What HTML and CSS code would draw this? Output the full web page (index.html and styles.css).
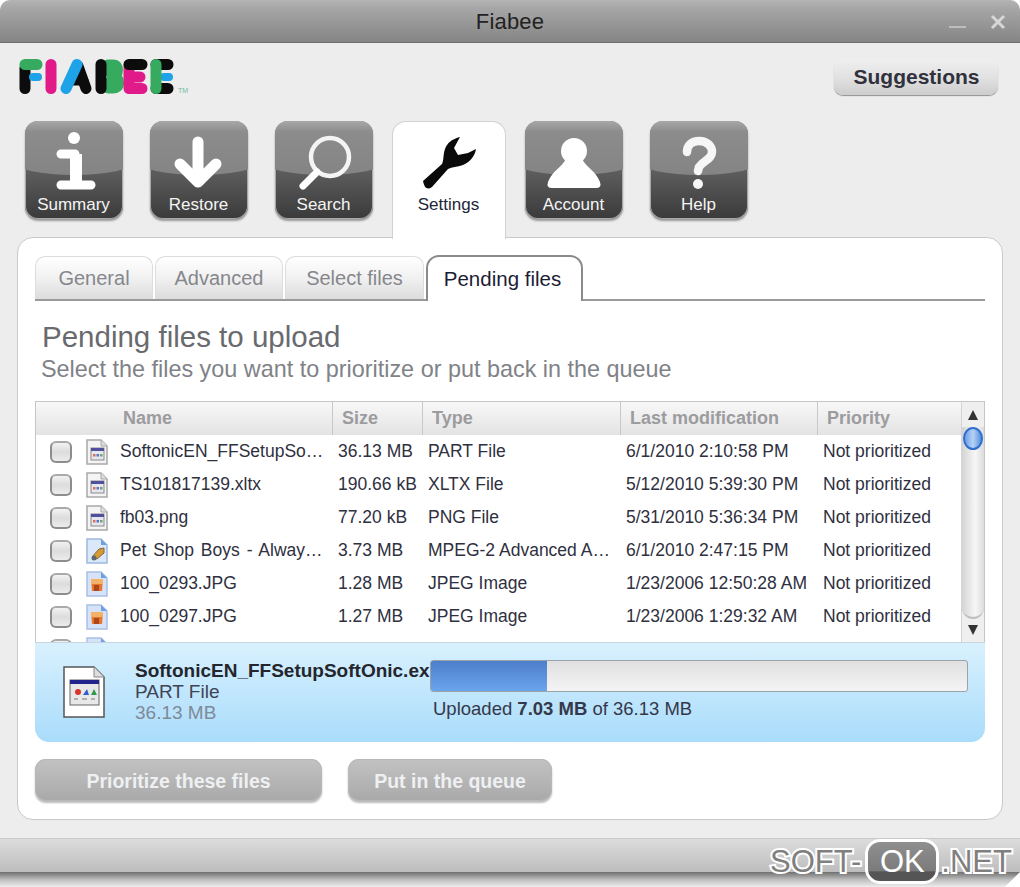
FILE: index.html
```html
<!DOCTYPE html>
<html lang="en">
<head>
<meta charset="utf-8">
<title>Fiabee</title>
<link rel="stylesheet" href="styles.css">
</head>
<body>
<svg class="defs" width="0" height="0" aria-hidden="true">
  <defs>
    <symbol id="doc" viewBox="0 0 22 26">
      <path d="M1 1H15L21 7V25H1Z" fill="#f4f4f4" stroke="#a8a8a8" stroke-width="1.500"/>
      <path d="M15 1V7H21" fill="#ddd" stroke="#a8a8a8"/>
      <rect x="5" y="9" width="13" height="12" fill="#e6e6ee" stroke="#8a8a8a"/>
      <rect x="5" y="9" width="13" height="3" fill="#50509c"/>
      <rect x="7" y="15" width="2.500" height="2.500" fill="#d8705c"/>
      <rect x="10.500" y="15" width="2.500" height="2.500" fill="#6070c8"/>
      <rect x="14" y="15" width="2.500" height="2.500" fill="#68a870"/>
    </symbol>
    <symbol id="media" viewBox="0 0 22 26">
      <path d="M1 1H15L21 7V25H1Z" fill="#dbe8fa" stroke="#9db8e0" stroke-width="1.500"/>
      <path d="M15 1V7H21" fill="#6f9fe0"/>
      <path d="M6 19L13 11L18 10L18 15L11 21Z" fill="#d89a30" stroke="#7b6a40"/>
      <circle cx="8" cy="20" r="2.500" fill="#606870"/>
    </symbol>
    <symbol id="photo" viewBox="0 0 22 26">
      <path d="M1 1H15L21 7V25H1Z" fill="#d5e2f8" stroke="#a9c0e6" stroke-width="1.500"/>
      <path d="M15 1V7H21" fill="#6f9fe0"/>
      <path d="M5 8H17L16 20H6Z" fill="#e8772c"/>
      <rect x="5" y="8" width="12" height="5" fill="#f3b267"/>
      <rect x="8" y="14" width="5" height="6" fill="#a8481c"/>
    </symbol>
  </defs>
</svg>
<div class="window">
  <header class="titlebar">
    <span class="title">Fiabee</span>
    <span class="winbtn minimize"></span>
    <svg class="winbtn close" viewBox="0 0 16 16" width="16" height="16" aria-hidden="true"><path d="M2 2L14 14M14 2L2 14" stroke="#d6d6d6" stroke-width="3"/></svg>
  </header>

  <div class="top-row">
    <svg class="logo" viewBox="18 58 172 38" width="172" height="38" role="img" aria-label="Fiabee">
      <g fill="none" stroke-width="11" stroke-linecap="round" stroke-linejoin="round">
        <path d="M25 68V88.500" stroke="#0c0c0c"/>
        <path d="M25 64.500H37" stroke="#36ab5f"/>
        <path d="M33 77H38" stroke="#1ea3e8" stroke-width="8"/>
        <path d="M51 64.500V88.500" stroke="#e01a88"/>
        <path d="M86 88.500L78 66" stroke="#0c0c0c"/>
        <path d="M72 81H84" stroke="#0c0c0c" stroke-width="9"/>
        <path d="M66 88.500L77 64.500" stroke="#1ea3e8"/>
        <path d="M108 64.500H113Q118 64.500 118 70Q118 76 112 76.500Q119 77 119 83Q119 88.500 113 88.500H108" stroke="#36ab5f" stroke-width="10"/>
        <path d="M109 72H113M109 82H113" stroke="#36ab5f" stroke-width="9"/>
        <path d="M101 64.500V88.500" stroke="#0c0c0c"/>
        <path d="M129 67V88.500H142M129 77H140" stroke="#e01a88"/>
        <path d="M129 64.500H142" stroke="#0c0c0c"/>
        <path d="M164 77H169" stroke="#1ea3e8" stroke-width="8"/>
        <path d="M156 64.500H168M156 88.500H168" stroke="#0c0c0c"/>
        <path d="M156 64.500V88.500" stroke="#36ab5f"/>
      </g>
      <text x="178" y="93" class="logo-tm">TM</text>
    </svg>
    <button class="suggest">Suggestions</button>
  </div>

  <nav class="toolbar">
    <a class="tile">
      <svg class="glyph" viewBox="0 0 98 98" aria-hidden="true">
        <circle cx="49" cy="17" r="6" fill="#fff"/>
        <path d="M36 33H50V63M36 64H66" fill="none" stroke="#fff" stroke-width="9" stroke-linecap="round" stroke-linejoin="round"/>
        <path d="M51 33V64" stroke="#fff" stroke-width="12"/>
      </svg>
      <span class="tile-label">Summary</span>
    </a>
    <a class="tile">
      <svg class="glyph" viewBox="0 0 98 98" aria-hidden="true">
        <path d="M48 21V58M30 43L48 61L66 43" fill="none" stroke="#fff" stroke-width="11" stroke-linecap="round" stroke-linejoin="round"/>
        <path d="M38 50H58L48 60Z" fill="#fff" stroke="#fff" stroke-width="4"/>
      </svg>
      <span class="tile-label">Restore</span>
    </a>
    <a class="tile">
      <svg class="glyph" viewBox="0 0 98 98" aria-hidden="true">
        <circle cx="55" cy="36" r="19" fill="none" stroke="#f4f4f4" stroke-width="4.500"/>
        <path d="M42 51L28 65" stroke="#fff" stroke-width="7" stroke-linecap="round"/>
      </svg>
      <span class="tile-label">Search</span>
    </a>
    <a class="tile-active">
      <svg class="glyph" viewBox="0 0 114 98" aria-hidden="true">
        <path d="M31 60L50 43C52 39 51 33 53 28C55 22 60 18 68 16L62 27L66 34L76 32L84 28C83 35 78 41 71 44C65 46 60 46 56 48L40 66Q33 71 31 60Z" fill="#0a0a0a"/>
      </svg>
      <span class="tile-label active-label">Settings</span>
    </a>
    <a class="tile">
      <svg class="glyph" viewBox="0 0 98 98" aria-hidden="true">
        <circle cx="49" cy="30" r="13" fill="#fff"/>
        <path d="M27 67Q21 67 23 61C27 50 37 46 41 38H57C61 46 71 50 75 61Q77 67 71 67Z" fill="#fff"/>
      </svg>
      <span class="tile-label">Account</span>
    </a>
    <a class="tile">
      <svg class="glyph" viewBox="0 0 98 98" aria-hidden="true">
        <path d="M37 31C37 24 42 20 49 20C57 20 62 25 62 31C62 38 53 40 49 46L48 50" fill="none" stroke="#f6f6f6" stroke-width="8.500" stroke-linecap="round"/>
        <circle cx="48" cy="63" r="5" fill="#f6f6f6"/>
      </svg>
      <span class="tile-label">Help</span>
    </a>
  </nav>

  <main class="panel">
    <div class="subtabs">
      <span class="subtab subtab-general">General</span>
      <span class="subtab subtab-advanced">Advanced</span>
      <span class="subtab subtab-select">Select files</span>
      <span class="subtab-active">Pending files</span>
    </div>

    <h1 class="heading">Pending files to upload</h1>
    <p class="subheading">Select the files you want to prioritize or put back in the queue</p>

    <section class="list">
      <div class="list-main">
        <div class="list-head">
          <span class="hcell hcell-name">Name</span>
          <span class="hcell">Size</span>
          <span class="hcell">Type</span>
          <span class="hcell">Last modification</span>
          <span class="hcell">Priority</span>
        </div>
        <div class="row">
          <span class="cell-name"><i class="check"></i><svg class="ficon"><use href="#doc"/></svg><span>SoftonicEN_FFSetupSo…</span></span>
          <span>36.13 MB</span><span>PART File</span><span>6/1/2010 2:10:58 PM</span><span>Not prioritized</span>
        </div>
        <div class="row">
          <span class="cell-name"><i class="check"></i><svg class="ficon"><use href="#doc"/></svg><span>TS101817139.xltx</span></span>
          <span>190.66 kB</span><span>XLTX File</span><span>5/12/2010 5:39:30 PM</span><span>Not prioritized</span>
        </div>
        <div class="row">
          <span class="cell-name"><i class="check"></i><svg class="ficon"><use href="#doc"/></svg><span>fb03.png</span></span>
          <span>77.20 kB</span><span>PNG File</span><span>5/31/2010 5:36:34 PM</span><span>Not prioritized</span>
        </div>
        <div class="row">
          <span class="cell-name"><i class="check"></i><svg class="ficon"><use href="#media"/></svg><span class="name-spaced">Pet Shop Boys - Alway…</span></span>
          <span>3.73 MB</span><span>MPEG-2 Advanced A…</span><span>6/1/2010 2:47:15 PM</span><span>Not prioritized</span>
        </div>
        <div class="row">
          <span class="cell-name"><i class="check"></i><svg class="ficon"><use href="#photo"/></svg><span>100_0293.JPG</span></span>
          <span>1.28 MB</span><span>JPEG Image</span><span>1/23/2006 12:50:28 AM</span><span>Not prioritized</span>
        </div>
        <div class="row">
          <span class="cell-name"><i class="check"></i><svg class="ficon"><use href="#photo"/></svg><span>100_0297.JPG</span></span>
          <span>1.27 MB</span><span>JPEG Image</span><span>1/23/2006 1:29:32 AM</span><span>Not prioritized</span>
        </div>
        <div class="row">
          <span class="cell-name"><i class="check"></i><svg class="ficon"><use href="#photo"/></svg></span>
        </div>
      </div>
      <div class="scrollbar">
        <i class="arrow-up"></i>
        <div class="track"><i class="thumb"></i></div>
        <i class="arrow-down"></i>
      </div>
    </section>

    <section class="upload">
      <svg class="upload-icon" viewBox="0 0 42 52" width="42" height="52" aria-hidden="true">
        <path d="M1 1H31L41 11V51H1Z" fill="#fff" stroke="#555" stroke-width="1.500"/>
        <path d="M31 1V11H41" fill="#ddd" stroke="#888"/>
        <rect x="7" y="14" width="29" height="25" fill="#e8e8e8" stroke="#666"/>
        <rect x="7" y="14" width="29" height="4" fill="#23238c"/>
        <circle cx="15" cy="26" r="3" fill="#d8342c"/>
        <path d="M20 29L24 23L26 29Z" fill="#2e5fc8"/>
        <path d="M28 29L31 23L34 29Z" fill="#2e9a4c"/>
        <path d="M11 33H15M19 33H24M28 33H32" stroke="#777"/>
      </svg>
      <div class="upload-info">
        <div class="upload-name">SoftonicEN_FFSetupSoftOnic.ex</div>
        <div class="upload-type">PART File</div>
        <div class="upload-size">36.13 MB</div>
      </div>
      <div class="upload-progress">
        <div class="bar"><div class="bar-fill" style="width:21.6%"></div></div>
        <div class="bar-text">Uploaded <b>7.03 MB</b> of 36.13 MB</div>
      </div>
    </section>

    <div class="actions">
      <button class="action action-wide">Prioritize these files</button>
      <button class="action action-narrow">Put in the queue</button>
    </div>
  </main>

  <footer class="statusbar"></footer>
</div>
<div class="shadow"></div>
<div class="watermark"><span class="wm-text">SOFT-</span><span class="wm-ok">OK</span><span class="wm-text">.NET</span></div>
</body>
</html>
```

FILE: styles.css
```css
* { box-sizing: border-box; }
html, body { margin: 0; padding: 0; }
body {
  width: 1020px;
  height: 887px;
  overflow: hidden;
  background: #fff;
  font-family: "Liberation Sans", Arial, sans-serif;
  position: relative;
}
.defs { position: absolute; }

.window {
  height: 872px;
  background: #ededed;
  border-radius: 10px 10px 0 0;
  display: flex;
  flex-direction: column;
  overflow: hidden;
}

.titlebar {
  height: 43px;
  flex: none;
  background: linear-gradient(#b4b4b4, #a6a6a6 20%, #858585);
  border-bottom: 1px solid #6f6f6f;
  display: flex;
  align-items: center;
  justify-content: center;
  position: relative;
}
.title { font-size: 22px; color: #222; margin-top: 2px; letter-spacing: .2px; }
.winbtn { position: absolute; }
.minimize { left: 949px; top: 26px; width: 17px; height: 2px; background: #bdbdbd; }
.close { left: 990px; top: 14px; }

.top-row {
  height: 78px;
  flex: none;
  display: flex;
  justify-content: space-between;
  align-items: flex-start;
  padding: 15px 22px 0 18px;
}
.logo { display: block; }
.logo-tm { font-size: 7px; fill: #77b9a0; }
.suggest {
  width: 164px;
  height: 36px;
  margin-top: 1px;
  border: 0;
  border-radius: 9px;
  background: linear-gradient(#efefef, #e2e2e2 50%, #cdcdcd);
  box-shadow: 0 1px 1px #8f8f8f;
  font: bold 21px "Liberation Sans", Arial, sans-serif;
  color: #30313d;
  padding: 0 0 0 1px;
}

.toolbar {
  flex: none;
  height: 117px;
  display: flex;
  gap: 27px;
  padding-left: 25px;
  align-items: flex-start;
  position: relative;
  z-index: 2;
}
.tile {
  width: 98px;
  height: 98px;
  border-radius: 13px;
  background: linear-gradient(#6a6a6a, #5e5e5e 50%, #3a3a3a);
  box-shadow: inset 0 0 0 1px #a8a8a8, 0 2px 2px #9a9a9a;
  color: #fff;
  position: relative;
  overflow: hidden;
  display: block;
}
.tile::before {
  content: "";
  position: absolute;
  left: -10px;
  right: -10px;
  top: 0;
  height: 54px;
  border-radius: 0 0 50% 50% / 0 0 13px 13px;
  background: linear-gradient(#a8a8a8, #8c8c8c 20%, #848484);
}
.tile-active {
  width: 114px;
  height: 118px;
  margin: 0 -8px;
  background: #fff;
  border: 1px solid #d2d2d2;
  border-bottom: 0;
  border-radius: 14px 14px 0 0;
  position: relative;
  display: block;
}
.glyph {
  position: absolute;
  left: 0;
  top: 0;
  width: 100%;
  height: 98px;
}
.tile-active .glyph { left: -1px; top: -1px; width: 114px; }
.tile-label {
  position: absolute;
  left: 0;
  right: 0;
  top: 73px;
  padding-right: 1px;
  text-align: center;
  font-size: 17px;
  line-height: 21px;
  color: #f4f4f4;
}
.active-label { color: #22253a; top: 72px; }

.panel {
  flex: none;
  height: 583px;
  margin: -1px 17px 0;
  background: #fff;
  border: 1px solid #c9c9c9;
  border-radius: 16px;
  padding: 18px 17px 0;
  position: relative;
  z-index: 1;
}

.subtabs {
  display: flex;
  gap: 2px;
  height: 45px;
  border-bottom: 2px solid #9a9a9a;
}
.subtab {
  height: 43px;
  padding-top: 10px;
  text-align: center;
  font-size: 20px;
  color: #86878c;
  border-radius: 10px 10px 0 0;
  background: linear-gradient(#fff, #f1f1f1 50%, #dcdcdc);
  border: 1px solid #dcdcdc;
  border-bottom: 0;
}
.subtab-general { width: 118px; }
.subtab-advanced { width: 128px; }
.subtab-select { width: 139px; }
.subtab-active {
  width: 157px;
  height: 46px;
  margin-top: -1px;
  padding: 10px 4px 0 0;
  text-align: center;
  font-size: 20.500px;
  color: #1c1c34;
  background: #fff;
  border: 2px solid #8a8a8a;
  border-bottom: 0;
  border-radius: 13px 13px 0 0;
}

.heading {
  margin: 19px 0 0 7px;
  font-size: 29.500px;
  line-height: 33px;
  font-weight: normal;
  color: #686a6e;
}
.subheading {
  margin: 1px 0 0 6px;
  font-size: 23.400px;
  line-height: 30px;
  color: #808287;
}

.list {
  margin-top: 17px;
  height: 241px;
  display: flex;
  border: 1px solid #c6c6c6;
  border-bottom: 0;
  overflow: hidden;
}
.list-main { flex: 1; min-width: 0; overflow: hidden; }
.list-head, .row {
  display: grid;
  grid-template-columns: 296px 90px 198px 197px 1fr;
}
.list-head {
  height: 33px;
  background: linear-gradient(#f8f8f8, #e3e3e3);
}
.hcell {
  font-weight: bold;
  font-size: 18px;
  line-height: 33px;
  color: #9c9c9f;
  padding-left: 9px;
  border-left: 1px solid #c8c8c8;
  white-space: nowrap;
}
.hcell-name { border-left: 0; padding-left: 87px; }
.row {
  height: 33px;
  font-size: 17.500px;
  line-height: 33px;
  color: #2f3040;
  white-space: nowrap;
}
.row > span { padding-left: 6px; overflow: hidden; }
.row > .cell-name { padding-left: 14px; display: flex; align-items: center; overflow: visible; }
.name-spaced { word-spacing: 2px; }
.check {
  width: 22px;
  height: 22px;
  flex: none;
  border: 2px solid #8d8d8d;
  border-top-color: #aaa;
  border-radius: 6px;
  background: linear-gradient(#f2f2f2, #dcdcdc 50%, #ececec);
}
.ficon { width: 22px; height: 26px; margin: 0 12px 0 14px; flex: none; }

.scrollbar {
  width: 23px;
  flex: none;
  display: flex;
  flex-direction: column;
  align-items: center;
  background: #efefef;
  border-left: 1px solid #d4d4d4;
}
.arrow-up, .arrow-down {
  width: 0;
  height: 0;
  flex: none;
  border-left: 5px solid transparent;
  border-right: 5px solid transparent;
}
.arrow-up { margin-top: 8px; border-bottom: 10px solid #333; }
.arrow-down { margin: 6px 0 7px; border-top: 10px solid #333; }
.track {
  flex: 1;
  width: 100%;
  margin-top: 7px;
  background: linear-gradient(90deg, #d4d4d4, #f6f6f6 60%, #dcdcdc);
  border-radius: 0 0 12px 12px;
  border-bottom: 2px solid #bdbdbd;
  position: relative;
}
.thumb {
  position: absolute;
  left: 1px;
  top: 0;
  width: 20px;
  height: 23px;
  border-radius: 50%;
  border: 2px solid #2f6fd0;
  background: linear-gradient(90deg, #6f9fe6, #b6d2f5 50%, #5d92de);
}

.upload {
  height: 100px;
  display: flex;
  background: linear-gradient(#d9f1fe, #a9dcfb);
  border-top: 1px solid #c6d6de;
  border-radius: 0 0 14px 14px;
}
.upload-icon { margin: 23px 30px 0 28px; flex: none; }
.upload-info { width: 295px; padding-top: 17px; flex: none; }
.upload-name {
  font-weight: bold;
  font-size: 19px;
  line-height: 21px;
  color: #24262e;
  white-space: nowrap;
  overflow: hidden;
}
.upload-type { font-size: 19px; line-height: 21px; color: #3f4354; }
.upload-size { font-size: 19px; line-height: 22px; color: #7f8a99; }
.upload-progress { flex: 1; padding: 17px 17px 0 0; }
.bar {
  height: 32px;
  background: linear-gradient(#e0e0e0, #f4f4f4);
  border: 1px solid #9aa3aa;
  border-radius: 3px;
  overflow: hidden;
}
.bar-fill { height: 100%; background: linear-gradient(#4d7ecb, #6aa5ec); }
.bar-text {
  margin: 5px 0 0 3px;
  font-size: 18.500px;
  line-height: 24px;
  color: #34384a;
}

.actions { display: flex; gap: 26px; margin-top: 17px; }
.action {
  height: 42px;
  padding: 2px 0 0;
  border: 0;
  border-radius: 11px;
  background: linear-gradient(#c2c2c2, #a9a9a9);
  box-shadow: inset 0 0 0 1px #b8b8b8, 0 2px 2px #bbb;
  color: #eef0f2;
  font: bold 19.500px "Liberation Sans", Arial, sans-serif;
}
.action-wide { width: 287px; }
.action-narrow { width: 204px; }

.statusbar {
  flex: none;
  height: 34px;
  margin-top: 18px;
  background: linear-gradient(#dcdcdc, #bdbdbd);
  border-top: 1px solid #c9c9c9;
}
.shadow {
  height: 15px;
  background: linear-gradient(#6f6f6f, #bdbdbd 50%, #eee);
  clip-path: polygon(0 0, 100% 0, 98.500% 100%, 0 100%);
}

.watermark {
  position: absolute;
  left: 770px;
  top: 838px;
  height: 47px;
  display: flex;
  align-items: center;
}
.wm-text {
  font-size: 31px;
  color: #7f7f7f;
  -webkit-text-stroke: 4px #fff;
  paint-order: stroke fill;
}
.wm-ok {
  width: 74px;
  height: 45px;
  margin: 0 2px 0 4px;
  text-align: center;
  font-size: 31px;
  line-height: 39px;
  color: #fff;
  border: 3px solid #fff;
  border-radius: 15px;
  background: linear-gradient(#8f8f8f, #7b7b7b 75%, #555 76%);
}
```
